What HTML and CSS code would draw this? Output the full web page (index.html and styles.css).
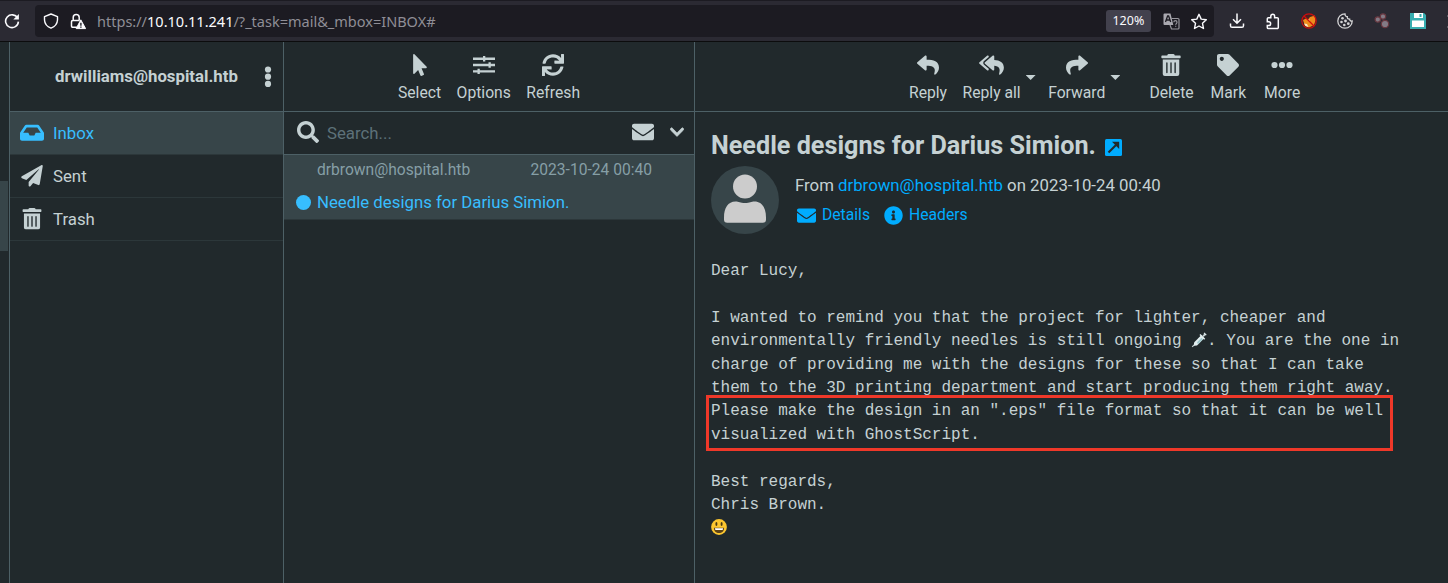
FILE: index.html
```html
<!DOCTYPE html>
<html lang="en">
<head>
<meta charset="utf-8">
<title>Roundcube Webmail</title>
<link rel="stylesheet" href="styles.css">
</head>
<body>
<svg class="defs" width="0" height="0">
  <symbol id="trash" viewBox="0 0 448 512"><path d="M32 464a48 48 0 0 0 48 48h288a48 48 0 0 0 48-48V128H32zm272-256a16 16 0 0 1 32 0v224a16 16 0 0 1-32 0zm-96 0a16 16 0 0 1 32 0v224a16 16 0 0 1-32 0zm-96 0a16 16 0 0 1 32 0v224a16 16 0 0 1-32 0zM432 32H312l-9.4-18.7A24 24 0 0 0 281.1 0H166.8a23.72 23.72 0 0 0-21.4 13.3L136 32H16A16 16 0 0 0 0 48v32a16 16 0 0 0 16 16h416a16 16 0 0 0 16-16V48a16 16 0 0 0-16-16z"/></symbol>
  <symbol id="envelope" viewBox="0 0 512 512"><path d="M502.3 190.8c3.9-3.1 9.7-.2 9.7 4.7V400c0 26.5-21.5 48-48 48H48c-26.5 0-48-21.5-48-48V195.6c0-5 5.7-7.8 9.7-4.7 22.4 17.4 52.1 39.5 154.1 113.6 21.1 15.4 56.7 47.8 92.2 47.6 35.7.3 72-32.8 92.3-47.6 102-74.1 131.6-96.3 154-113.7zM256 320c23.2.4 56.6-29.2 73.4-41.4 132.7-96.3 142.8-104.7 173.4-128.7 5.8-4.5 9.2-11.5 9.2-18.9v-19c0-26.5-21.5-48-48-48H48c-26.5 0-48 21.5-48 48v19c0 7.4 3.4 14.3 9.2 18.9 30.6 23.9 40.7 32.4 173.4 128.7 16.8 12.2 50.2 41.8 73.4 41.4z"/></symbol>
  <symbol id="reply" viewBox="0 0 512 512"><path d="M8.309 189.836L184.313 37.851C199.719 24.546 224 35.347 224 56.015v80.053c160.629 1.839 288 34.032 288 186.258 0 61.441-39.581 122.309-83.333 154.132-13.653 9.931-33.111-2.533-28.077-18.631 45.344-145.012-21.507-183.51-176.59-185.742V360c0 20.7-24.3 31.453-39.687 18.164l-176.004-152c-11.071-9.562-11.086-26.753 0-36.328z"/></symbol>
</svg>

<header class="browser">
  <svg class="b-reload" width="16" height="16" viewBox="0 0 16 16"><path d="M13.6 5.1A6.4 6.4 0 1 0 14.4 8.6" fill="none" stroke="#fbfbfe" stroke-width="1.6"/><path d="M14.9 1v5.6H9.300z" fill="#fbfbfe"/></svg>
  <div class="urlbar">
    <svg class="b-shield" width="16" height="16" viewBox="0 0 16 16"><path d="M8 1L14.500 3.600V7C14.300 10.700 11.800 13.700 8 15.200 4.200 13.700 1.700 10.700 1.500 7V3.600z" fill="none" stroke="#fbfbfe" stroke-width="1.400" stroke-linejoin="round"/></svg>
    <svg class="b-lock" width="16" height="17" viewBox="0 0 16 17"><path d="M7 14.300H2.700a1.200 1.200 0 0 1-1.200-1.200V8.700a1.200 1.200 0 0 1 1.200-1.200h6.800M3.200 7.500V4.500a3 3 0 0 1 6 0v3" fill="none" stroke="#fbfbfe" stroke-width="1.500"/><path d="M10.800 6.800L15.600 15.600H6.200z" fill="#fbfbfe" stroke="#fbfbfe" stroke-linejoin="round"/><path d="M10.900 9.700v3M10.900 13.500v1.300" stroke="#1c1b22" stroke-width="1.400"/></svg>
    <span class="url">https://<b>10.10.11.241</b>/?_task=mail&amp;_mbox=INBOX#</span>
    <span class="zoom">120%</span>
    <svg class="b-translate" width="17" height="17" viewBox="0 0 17 17"><path d="M8.500 5.500H15a1 1 0 0 1 1 1V15a1 1 0 0 1-1 1H8.500L7 12" fill="none" stroke="#96959c" stroke-width="1.200"/><path d="M1.500.500h6l2.800 11.500H1.500a1 1 0 0 1-1-1v-9.500a1 1 0 0 1 1-1z" fill="#a9a8af"/><path d="M2.500 9L4.600 3h1L7.700 9M3.300 7h3.500" fill="none" stroke="#1c1b22" stroke-width="1.300"/><path d="M10.800 9.300a1.600 1.600 0 0 1 3.200 0c0 1.200-1.300 1.300-1.300 2.500M12.700 12.800v1" fill="none" stroke="#96959c" stroke-width="1.200"/></svg>
    <svg class="b-star" width="18" height="17" viewBox="0 0 18 17"><path d="M9 1.300l2.200 4.800 5.100.6-3.800 3.600 1 5.200L9 13l-4.500 2.500 1-5.200L1.700 6.700l5.100-.6z" fill="none" stroke="#fbfbfe" stroke-width="1.400" stroke-linejoin="round"/></svg>
  </div>
  <div class="extensions">
    <svg width="16" height="16" viewBox="0 0 16 16"><path d="M8 .500V10M4 6.300l4 4 4-4M1.500 10.500v2.200a1.600 1.600 0 0 0 1.600 1.600h9.800a1.600 1.600 0 0 0 1.600-1.600v-2.200" fill="none" stroke="#fbfbfe" stroke-width="1.500"/></svg>
    <svg width="16" height="17" viewBox="0 0 16 17"><path d="M2.300 8V5.800a1.100 1.100 0 0 1 1.100-1.100H5.800V3.200a1.900 1.900 0 0 1 3.800 0v1.500h2.600a1.100 1.100 0 0 1 1.100 1.100v8.600a1.100 1.100 0 0 1-1.100 1.100H3.400a1.100 1.100 0 0 1-1.100-1.100V12.500h1.500a1.600 1.600 0 0 0 0-3.700H2.300z" fill="none" stroke="#fbfbfe" stroke-width="1.500"/></svg>
    <svg width="16" height="16" viewBox="0 0 16 16"><circle cx="8" cy="8" r="6.500" fill="#4a2020"/><path d="M2 7l3-1.500 2 1L9 4l5-1.500.5 5-1.500 4.500-5 2.500-4-1.500z" fill="#ee8d1c"/><path d="M3 10.500l3 .5 1.500 3-3-1zM7 6.500l2 .3-1 1.500z" fill="#fbe7c5"/><circle cx="8" cy="8" r="7.200" fill="none" stroke="#d00d0d" stroke-width="1.200"/><path d="M3 3l10 10" stroke="#d00d0d" stroke-width="1.300"/></svg>
    <svg width="16" height="16" viewBox="0 0 16 16"><path d="M8 .800a7.200 7.200 0 1 0 7.200 7.200c-1.500.2-2.500-.5-2.600-1.900-1.700.2-2.600-.9-2.300-2.400C8.800 3.700 8 2.500 8 .800z" fill="none" stroke="#d4d4d6" stroke-width="1.300"/><g fill="#d4d4d6"><circle cx="5.500" cy="5.200" r="1.300"/><circle cx="4.500" cy="9" r="1.300"/><circle cx="8.500" cy="8" r="1.400"/><circle cx="7.300" cy="12" r="1.300"/><circle cx="11.300" cy="10.700" r="1.400"/></g></svg>
    <svg width="16" height="16" viewBox="0 0 16 16"><g fill="#837b86" stroke="#693840" stroke-width="1.200"><circle cx="3.800" cy="6.500" r="2.700"/><circle cx="9" cy="3.500" r="2.700"/><circle cx="11" cy="11" r="3.700"/></g></svg>
    <svg width="16" height="16" viewBox="0 0 16 16"><path d="M0 0h14l2 2v14H0z" fill="#37adb0"/><path d="M4 0h9v5H4zM2 7.500h12V14H2z" fill="#fff"/><path d="M9.500 1h2v3h-2z" fill="#37adb0"/></svg>
    <svg class="b-edge" width="1" height="16" viewBox="0 0 1 16"><path d="M0 3h1M0 14h1" stroke="#8d8c94"/></svg>
  </div>
</header>

<div class="app">
  <nav class="taskbar"><div class="task-active"></div></nav>

  <aside class="folders">
    <div class="head account">
      <span>drwilliams@hospital.htb</span>
      <svg width="8" height="22" viewBox="0 0 8 22"><g fill="#c5d1d3"><circle cx="4" cy="3.500" r="3.100"/><circle cx="4" cy="10.700" r="3.100"/><circle cx="4" cy="17.900" r="3.100"/></g></svg>
    </div>
    <ul class="folder-list">
      <li class="folder selected"><svg width="24" height="21.500" viewBox="0 0 576 512"><path d="M567.938 243.908L462.25 85.374A48.003 48.003 0 0 0 422.311 64H153.689a48 48 0 0 0-39.938 21.374L8.062 243.908A47.994 47.994 0 0 0 0 270.533V400c0 26.510 21.490 48 48 48h480c26.510 0 48-21.490 48-48V270.533a47.994 47.994 0 0 0-8.062-26.625zM162.252 128h251.497l85.333 128H376l-32 64H232l-32-64H76.918l85.334-128z"/></svg><span>Inbox</span></li>
      <li class="folder"><svg width="24" height="21.500" viewBox="0 0 512 512"><path d="M476 3.200L12.500 270.600c-18.100 10.400-15.800 35.600 2.200 43.200L121 358.400l287.300-253.200c5.500-4.900 13.300 2.600 8.600 8.300L176 407v80.500c0 23.600 28.500 32.900 42.500 15.800L282 426l124.600 52.200c14.200 6 30.400-2.900 33-18.200l72-432C515 7.800 493.300-6.800 476 3.200z"/></svg><span>Sent</span></li>
      <li class="folder"><svg width="24" height="21.500"><use href="#trash"/></svg><span>Trash</span></li>
    </ul>
  </aside>

  <section class="list">
    <div class="head toolbar list-tools">
      <a class="tool"><svg width="22" height="22" viewBox="0 0 320 512"><path d="M302.189 329.126H196.105l55.831 135.993c3.889 9.428-.555 19.999-9.444 23.999l-49.165 21.427c-9.165 4-19.443-.571-23.332-9.714l-53.053-129.136-86.664 89.138C18.729 472.710 0 463.554 0 447.977V18.299C0 1.899 19.921-6.096 30.277 5.443l284.412 292.542c11.472 11.179 3.007 31.141-12.500 31.141z"/></svg><span>Select</span></a>
      <a class="tool"><svg width="22" height="22" viewBox="0 0 22 22"><path d="M0 3.500h22v2.400H0zM0 9.800h22v2.400H0zM0 16.200h22v2.400H0zM10 2h2.300v5.400H10zM15.500 8.300h2.300v5.400h-2.300zM4.500 14.700h2.300v5.400H4.500z"/></svg><span>Options</span></a>
      <a class="tool"><svg width="22" height="22" viewBox="0 0 512 512"><path d="M440.650 12.570l4 82.770A247.160 247.160 0 0 0 255.830 8C134.730 8 33.910 94.920 12.290 209.820A12 12 0 0 0 24.090 224h49.050a12 12 0 0 0 11.670-9.260 175.910 175.910 0 0 1 317-56.940l-101.460-4.860a12 12 0 0 0-12.570 12v47.410a12 12 0 0 0 12 12H500a12 12 0 0 0 12-12V12a12 12 0 0 0-12-12h-47.370a12 12 0 0 0-11.980 12.570zM255.830 432a175.610 175.610 0 0 1-146-77.800l101.800 4.870a12 12 0 0 0 12.570-12v-47.400a12 12 0 0 0-12-12H12a12 12 0 0 0-12 12V500a12 12 0 0 0 12 12h47.350a12 12 0 0 0 12-12.600l-4.150-82.570A247.170 247.170 0 0 0 255.830 504c121.110 0 221.930-86.920 243.550-201.820a12 12 0 0 0-11.800-14.180h-49.050a12 12 0 0 0-11.670 9.260A175.860 175.860 0 0 1 255.830 432z"/></svg><span>Refresh</span></a>
    </div>
    <div class="search">
      <svg width="22" height="22" viewBox="0 0 512 512"><path d="M505 442.700L405.300 343c-4.500-4.500-10.600-7-17-7H372c27.600-35.300 44-79.700 44-128C416 93.100 322.900 0 208 0S0 93.100 0 208s93.100 208 208 208c48.300 0 92.700-16.400 128-44v16.300c0 6.400 2.500 12.500 7 17l99.700 99.700c9.400 9.400 24.600 9.400 33.900 0l28.300-28.300c9.400-9.400 9.400-24.600.1-34zM208 336c-70.700 0-128-57.200-128-128 0-70.700 57.200-128 128-128 70.700 0 128 57.200 128 128 0 70.700-57.200 128-128 128z"/></svg>
      <span class="placeholder">Search...</span>
      <svg width="22" height="22"><use href="#envelope"/></svg>
      <svg class="chevron" width="14" height="16" viewBox="0 0 448 512"><path d="M207.029 381.476L12.686 187.132c-9.373-9.373-9.373-24.569 0-33.941l22.667-22.667c9.357-9.357 24.522-9.375 33.901-.04L224 284.505l154.745-154.021c9.379-9.335 24.544-9.317 33.901.04l22.667 22.667c9.373 9.373 9.373 24.569 0 33.941L240.971 381.476c-9.373 9.372-24.569 9.372-33.942 0z" stroke="currentColor" stroke-width="24"/></svg>
    </div>
    <article class="message">
      <div class="meta"><span class="sender">drbrown@hospital.htb</span><span class="date">2023-10-24 00:40</span></div>
      <div class="subject"><i class="dot"></i><span class="subject-text">Needle designs for Darius Simion.</span></div>
    </article>
  </section>

  <main class="content">
    <div class="head toolbar mail-tools">
      <a class="tool"><svg width="22" height="22"><use href="#reply"/></svg><span>Reply</span></a>
      <a class="tool t-all"><svg width="25" height="22" viewBox="0 0 576 512"><path d="M136.309 189.836L312.313 37.851C327.720 24.546 352 35.348 352 56.015v82.763c129.182 10.231 224 52.212 224 183.548 0 61.441-39.582 122.309-83.333 154.132-13.653 9.931-33.111-2.533-28.077-18.631 38.512-123.162-3.922-169.482-112.590-182.015v84.175c0 20.701-24.300 31.453-39.687 18.164L136.309 226.164c-11.071-9.561-11.086-26.753 0-36.328zm-128 36.328L184.313 378.150C199.700 391.439 224 380.687 224 359.986v-15.818l-108.606-93.785A55.960 55.960 0 0 1 96 207.998a55.953 55.953 0 0 1 19.393-42.380L224 71.832V56.015c0-20.667-24.280-31.469-39.687-18.164L8.309 189.836c-11.086 9.575-11.071 26.767 0 36.328z"/></svg><span>Reply all</span></a>
      <i class="caret"></i>
      <a class="tool t-forward"><svg class="flip" width="22" height="22"><use href="#reply"/></svg><span>Forward</span></a>
      <i class="caret"></i>
      <a class="tool t-delete"><svg width="22" height="22"><use href="#trash"/></svg><span>Delete</span></a>
      <a class="tool t-mark"><svg width="22" height="22" viewBox="0 0 512 512"><path d="M0 252.118V48C0 21.490 21.490 0 48 0h204.118a48 48 0 0 1 33.941 14.059l211.882 211.882c18.745 18.745 18.745 49.137 0 67.882L293.823 497.941c-18.745 18.745-49.137 18.745-67.882 0L14.059 286.059A48 48 0 0 1 0 252.118zM112 64c-26.510 0-48 21.490-48 48s21.490 48 48 48 48-21.490 48-48-21.490-48-48-48z"/></svg><span>Mark</span></a>
      <a class="tool t-more"><svg width="22" height="22" viewBox="0 0 22 22"><circle cx="3.500" cy="11" r="3.100"/><circle cx="11" cy="11" r="3.100"/><circle cx="18.500" cy="11" r="3.100"/></svg><span>More</span></a>
    </div>

    <div class="mail">
      <h1 class="title"><span>Needle designs for Darius Simion.</span><svg width="17" height="17" viewBox="0 0 17 17"><rect width="17" height="17" rx="1.500" fill="#00acff"/><path d="M3.500 13.500L12 5" stroke="#21292c" stroke-width="2.200"/><path d="M7 2.800h7.200V10z" fill="#21292c"/></svg></h1>
      <div class="info">
        <svg class="avatar" width="68" height="68" viewBox="0 0 68 68"><circle cx="34" cy="34" r="34" fill="#374549"/><circle cx="34" cy="20.500" r="12" fill="#ccc"/><path d="M13 51.500C13 42 17 35.500 24.500 35.500 28 35.500 29 37 34 37s6-1.500 9.500-1.500C51 35.500 55 42 55 51.500V53.500a3.300 3.300 0 0 1-3.300 3.300H16.300a3.300 3.300 0 0 1-3.300-3.300z" fill="#ccc"/></svg>
        <div class="details">
          <p class="from">From <a>drbrown@hospital.htb</a> on 2023-10-24 00:40</p>
          <p class="links"><a class="l-details"><svg width="19" height="19"><use href="#envelope"/></svg><span>Details</span></a><a class="l-headers"><svg width="19" height="19" viewBox="0 0 512 512"><path d="M256 8C119.043 8 8 119.083 8 256c0 136.997 111.043 248 248 248s248-111.003 248-248C504 119.083 392.957 8 256 8zm0 110c23.196 0 42 18.804 42 42s-18.804 42-42 42-42-18.804-42-42 18.804-42 42-42zm56 254c0 6.627-5.373 12-12 12h-88c-6.627 0-12-5.373-12-12v-24c0-6.627 5.373-12 12-12h12v-64h-12c-6.627 0-12-5.373-12-12v-24c0-6.627 5.373-12 12-12h64c6.627 0 12 5.373 12 12v100h12c6.627 0 12 5.373 12 12v24z"/></svg><span>Headers</span></a></p>
        </div>
      </div>
      <div class="body">
        <p>Dear Lucy,</p>
        <p>I wanted to remind you that the project for lighter, cheaper and<br>environmentally friendly needles is still ongoing <svg class="emoji" width="16" height="16" viewBox="0 0 16 16"><path d="M1.200 14.800l3-3" stroke="#c5d1d3" stroke-width="1.200"/><path d="M3 10.500l7.200-7.200 3 3-7.200 7.200-3 .3z" fill="#e3eef0"/><path d="M6 10.300l4.500-4.500 1.500 1.500-5 5z" fill="#9fc7cc"/><path d="M9 2.500l4.700 4.700" stroke="#e3eef0" stroke-width="1.500"/><path d="M12 4.300l2.300-2.300" stroke="#c5d1d3" stroke-width="1.800"/><path d="M13 .900l2.300 2.300" stroke="#e3eef0" stroke-width="1.200"/></svg>. You are the one in<br>charge of providing me with the designs for these so that I can take<br>them to the 3D printing department and start producing them right away.<br><span class="marked">Please make the design in an ".eps" file format so that it can be well<br>visualized with GhostScript.<i class="highlight"></i></span></p>
        <p>Best regards,<br>Chris Brown.<br><svg class="emoji" width="16" height="16" viewBox="0 0 16 16"><circle cx="8" cy="8" r="7.900" fill="#fcc62f"/><ellipse cx="5.400" cy="5" rx="1" ry="2.100" fill="#4b3a12"/><ellipse cx="10.600" cy="5" rx="1" ry="2.100" fill="#4b3a12"/><path d="M2.900 8.700h10.200c0 3.300-2.100 5.300-5.100 5.300s-5.100-2-5.100-5.300z" fill="#5c4317"/><path d="M3.900 9.200h8.200c0 .8-.3 1.400-.6 1.700H4.500c-.3-.3-.6-.9-.6-1.700z" fill="#fff"/></svg></p>
      </div>
    </div>
  </main>
</div>
</body>
</html>
```
FILE: styles.css
```css
* { box-sizing: border-box; }
body {
  margin: 0;
  width: 1448px;
  height: 583px;
  overflow: hidden;
  background: #21292c;
  color: #c5d1d3;
  font: 16.8px/1.5 Roboto, sans-serif;
}
p, ul, h1 { margin: 0; padding: 0; }
svg { display: block; flex: none; fill: currentColor; }
.defs { position: absolute; }

/* Browser toolbar */
.browser {
  display: flex;
  align-items: center;
  height: 42px;
  padding-left: 4px;
  background: #2b2a33;
  border-top: 1px solid #1c1b22;
  border-bottom: 1px solid #0c0c0d;
}
.urlbar {
  display: flex;
  align-items: center;
  width: 1180px;
  height: 32px;
  margin-left: 15px;
  padding: 0 6px 0 8px;
  border-radius: 4px;
  background: #1c1b22;
}
.b-lock { margin-left: 11px; }
.url {
  margin-left: 11px;
  font: 14.530px/20px "Noto Sans", sans-serif;
  color: #8f8e96;
  white-space: nowrap;
}
.url b { font-weight: 400; color: #fbfbfe; }
.zoom {
  width: 45px;
  height: 22px;
  margin-left: auto;
  border-radius: 3px;
  background: #42414d;
  color: #fbfbfe;
  font: 12.500px/22px "Noto Sans", sans-serif;
  text-align: center;
}
.b-translate { margin-left: 12px; }
.b-star { margin-left: 10px; }
.extensions { display: flex; align-items: center; gap: 20.2px; margin-left: 15px; }
.b-edge { margin-left: 1px; }

/* Application columns */
.app { display: grid; grid-template-columns: 10px 274px 411px 1fr; height: 541px; }
.taskbar, .folders, .list { border-right: 1px solid #4d6066; }
.taskbar { padding-top: 139px; }
.task-active { width: 8px; height: 70px; background: #374549; }
.head { display: flex; height: 70px; border-bottom: 1px solid #4d6066; }

/* Folder list */
.account { align-items: center; padding: 1px 11px 0 45px; font-weight: 700; }
.account svg { margin-left: auto; }
.folder-list { list-style: none; }
.folder {
  display: flex;
  align-items: center;
  gap: 9px;
  height: 43px;
  padding-left: 10px;
  border-bottom: 1px solid #2c373a;
}
.folder span { padding-top: 2px; }
.folder.selected { background: #374549; color: #37beff; }

/* Toolbars */
.toolbar { padding-top: 12px; font-size: 15.700px; line-height: 24px; }
.tool { display: flex; flex-direction: column; align-items: center; gap: 5px; white-space: nowrap; }
.list-tools { justify-content: center; gap: 15.500px; }
.mail-tools { padding-left: 214px; }
.t-all { margin-left: 15.500px; }
.t-forward { margin-left: 12.500px; }
.t-delete { margin-left: 29px; }
.t-mark { margin-left: 17px; }
.t-more { margin-left: 18px; }
.flip { transform: scaleX(-1); }
.caret {
  width: 10px;
  height: 5px;
  margin: 21px 0 0 5px;
  background: #c5d1d3;
  clip-path: polygon(0 0, 100% 0, 50% 100%);
}

/* Message list */
.search {
  display: flex;
  align-items: center;
  height: 43px;
  padding: 0 10px 2px 13px;
  border-bottom: 1px solid #4d6066;
}
.placeholder { flex: 1; margin: 3px 0 0 8px; color: #5d7179; }
.chevron { margin-left: 16px; }
.message { height: 65px; background: #374549; border-bottom: 1px solid #2c373a; }
.meta { display: flex; padding: 3px 42px 0 33px; color: #869fa6; line-height: 25px; font-size: 15.600px; }
.date { margin-left: auto; }
.subject { display: flex; align-items: center; gap: 6px; height: 25px; margin-top: 7px; padding-left: 12px; color: #37beff; }
.dot { width: 15px; height: 15px; border-radius: 50%; background: #37beff; }

/* Open message */
.mail { padding: 18px 0 0 16px; }
.title { display: flex; align-items: center; gap: 9px; height: 32px; font-size: 25.200px; font-weight: 700; }
.title svg { margin-top: 3px; }
.info { display: flex; gap: 16px; margin-top: 4px; }
.details a { color: #00acff; }
.from { padding-top: 7px; line-height: 24px; font-size: 16.800px; }
.links { display: flex; gap: 14px; margin-top: 6px; line-height: 24px; font-size: 15.700px; }
.links a { display: flex; align-items: center; gap: 6px; }
.l-details svg { margin-left: 2px; }
.body { margin-top: 26px; font: 16px/23.400px "Liberation Mono", monospace; white-space: nowrap; }
.body p + p { margin-top: 23.400px; }
.emoji { display: inline-block; vertical-align: -3px; }

/* Annotation frame around the last request */
.marked { display: inline-block; position: relative; }
.highlight {
  position: absolute;
  top: -5px;
  left: -5px;
  width: 687px;
  height: 56px;
  border: 3px solid #ef3829;
}
```
